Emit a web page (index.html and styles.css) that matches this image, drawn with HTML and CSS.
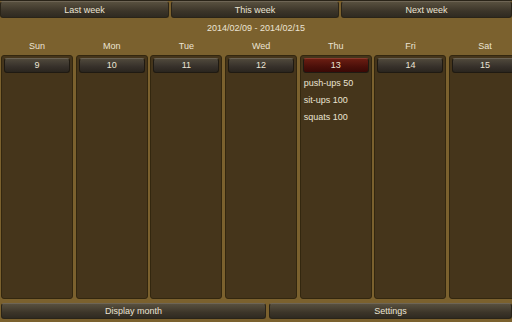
FILE: index.html
```html
<!DOCTYPE html>
<html lang="en">
<head>
  <meta charset="UTF-8">
  <title>Workout Week</title>
  <link rel="stylesheet" href="styles.css">
</head>
<body>

  <nav class="topbar">
    <button class="btn">Last week</button>
    <button class="btn">This week</button>
    <button class="btn">Next week</button>
  </nav>

  <div class="range">2014/02/09 - 2014/02/15</div>

  <div class="week">
    <div class="day">
      <div class="dayname">Sun</div>
      <div class="col"><div class="num">9</div></div>
    </div>
    <div class="day">
      <div class="dayname">Mon</div>
      <div class="col"><div class="num">10</div></div>
    </div>
    <div class="day">
      <div class="dayname">Tue</div>
      <div class="col"><div class="num">11</div></div>
    </div>
    <div class="day">
      <div class="dayname">Wed</div>
      <div class="col"><div class="num">12</div></div>
    </div>
    <div class="day">
      <div class="dayname">Thu</div>
      <div class="col">
        <div class="num today">13</div>
        <ul class="entries">
          <li>push-ups 50</li>
          <li>sit-ups 100</li>
          <li>squats 100</li>
        </ul>
      </div>
    </div>
    <div class="day">
      <div class="dayname">Fri</div>
      <div class="col"><div class="num">14</div></div>
    </div>
    <div class="day">
      <div class="dayname">Sat</div>
      <div class="col"><div class="num">15</div></div>
    </div>
  </div>

  <footer class="bottombar">
    <button class="btn">Display month</button>
    <button class="btn">Settings</button>
  </footer>

</body>
</html>
```

FILE: styles.css
```css
body {
  margin: 0;
  width: 512px;
  height: 322px;
  overflow: hidden;
  font-family: 'Liberation Sans', Arial, sans-serif;
  font-size: 9px;
  color: #ebe4d4;
  background: #7b612e;
  display: flex;
  flex-direction: column;
}

.btn {
  font-family: inherit;
  font-size: 9px;
  color: #ebe4d4;
  border: 1px solid #2a2418;
  border-top-color: #6e6555;
  border-radius: 3px;
  background: linear-gradient(#58503f, #3c3529 60%, #2f2a21);
  padding: 0;
  margin: 0;
  cursor: pointer;
}

.topbar {
  display: grid;
  grid-template-columns: 169px 168px 1fr;
  gap: 2px;
  padding-top: 1px;
  height: 17px;
  background: linear-gradient(#2a2418 1px, transparent 1px);
}

.range {
  height: 19px;
  line-height: 21px;
  text-align: center;
}

.week {
  display: grid;
  grid-template-columns: repeat(7, 72px);
  column-gap: 2.7px;
  padding-left: 1px;
  height: 263px;
}

.dayname {
  height: 18px;
  line-height: 18px;
  text-align: center;
}

.col {
  height: 244px;
  box-sizing: border-box;
  background: #45351b;
  border: 1px solid #33270f;
  border-radius: 3px;
  padding: 2px 2px 0;
}

.num {
  height: 13px;
  line-height: 13px;
  text-align: center;
  border: 1px solid #1f1a12;
  border-top-color: #6a6253;
  border-radius: 3px;
  background: linear-gradient(#4f483b, #36302a 60%, #2a251e);
}

.num.today {
  background: linear-gradient(#6a1d12, #4a0f09 60%, #3a0906);
  border-top-color: #8a3a2c;
}

.entries {
  list-style: none;
  margin: 0;
  padding: 2px 0 0 1px;
}

.entries li {
  height: 17px;
  line-height: 17px;
}

.bottombar {
  display: grid;
  grid-template-columns: 265px 1fr;
  gap: 3px;
  padding: 3px 0 0 1px;
  height: 16px;
}
```
